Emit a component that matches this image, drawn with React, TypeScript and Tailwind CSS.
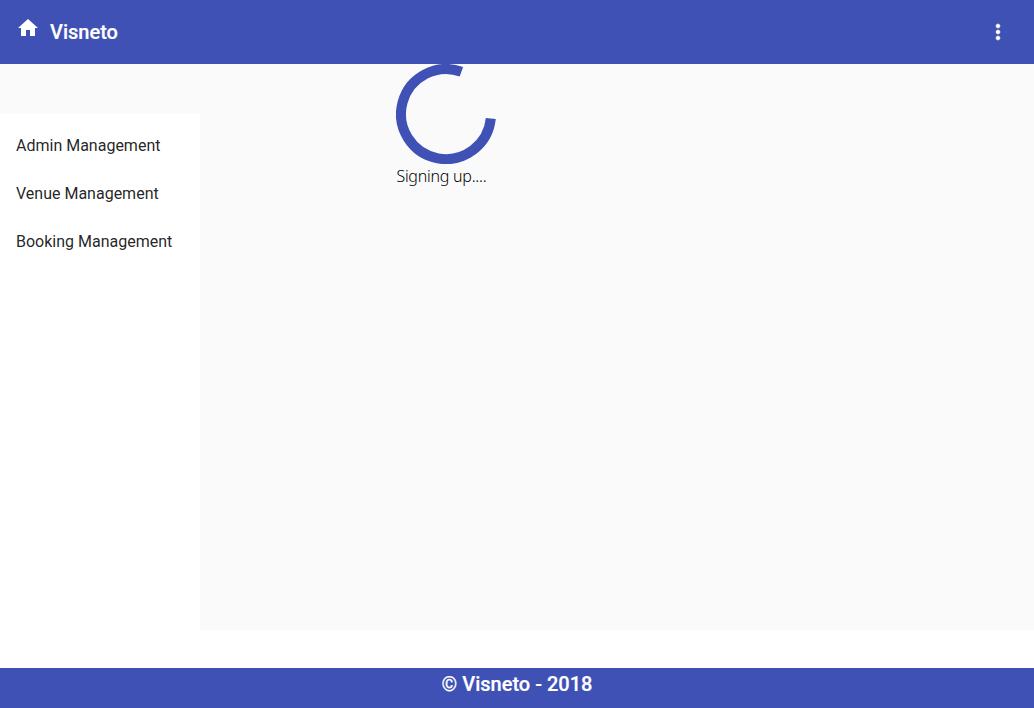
import React from "react";

const menuItems = ["Admin Management", "Venue Management", "Booking Management"];

export default function App() {
  return (
    <div className="flex h-[708px] w-full flex-col overflow-hidden bg-white font-['Roboto',sans-serif]">
      <header className="flex h-16 shrink-0 items-center justify-between bg-[#3f51b5] pl-4 pr-6 text-white">
        <div className="flex items-center">
          <svg viewBox="0 0 24 24" className="mb-2 size-6" fill="currentColor">
            <path d="M10 20v-6h4v6h5v-8h3L12 3 2 12h3v8z" />
          </svg>
          <h1 className="ml-2.5 text-xl font-medium [-webkit-text-stroke:0.2px_white]">Visneto</h1>
        </div>
        <button aria-label="Menu">
          <svg viewBox="0 0 24 24" className="size-6" fill="currentColor" stroke="currentColor" strokeWidth="0.5">
            <path d="M12 8c1.1 0 2-.9 2-2s-.9-2-2-2-2 .9-2 2 .9 2 2 2zm0 2c-1.1 0-2 .9-2 2s.9 2 2 2 2-.9 2-2-.9-2-2-2zm0 6c-1.1 0-2 .9-2 2s.9 2 2 2 2-.9 2-2-.9-2-2-2z" />
          </svg>
        </button>
      </header>
      <div className="flex h-[566px] shrink-0 bg-[#fafafa]">
        <nav className="mt-[50px] w-[200px] bg-white pt-2 text-base text-black/87">
          {menuItems.map((item) => (
            <a key={item} className="flex h-12 items-center px-4">{item}</a>
          ))}
        </nav>
        <main className="ml-[196px]">
          <svg viewBox="0 0 100 100" className="block size-[100px]" fill="none" stroke="#3f51b5" strokeWidth="10">
            <path d="M65.4 7.8A45 45 0 1 0 94.8 54.6" />
          </svg>
          <p className="pl-[0.4px] font-['Noto_Sans',sans-serif] text-base leading-6 font-light tracking-[-0.24px] text-black">Signing up....</p>
        </main>
      </div>
      <footer className="mt-[38px] flex h-10 shrink-0 justify-center bg-[#3f51b5] text-xl leading-8 font-medium text-white [-webkit-text-stroke:0.2px_white]">
        © Visneto - 2018
      </footer>
    </div>
  );
}
